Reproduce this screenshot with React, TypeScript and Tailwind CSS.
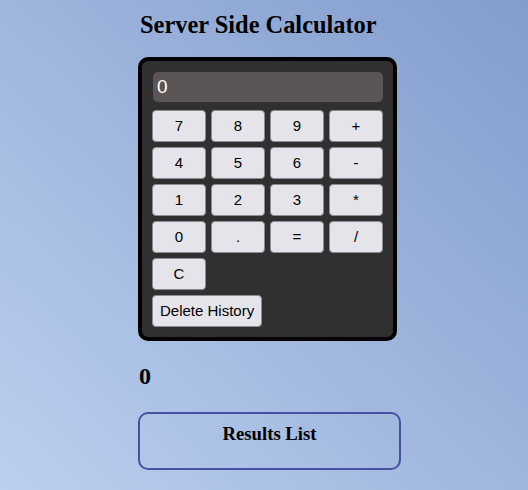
import React from "react";

const keys = ["7", "8", "9", "+", "4", "5", "6", "-", "1", "2", "3", "*", "0", ".", "=", "/", "C"];

const btn =
  "h-[32px] rounded-[4px] border border-[#8d8c92] bg-[#e5e4ea] text-[15px] text-black flex items-center justify-center";

export default function App() {
  return (
    <div
      className="w-[528px] h-[490px] overflow-hidden bg-linear-to-tr from-[#bbcfee] to-[#829ccc] pl-[138px] pt-[11px]"
      style={{ fontFamily: '"Liberation Sans", Arial, sans-serif' }}
    >
      <h2
        className="text-[24.4px] leading-[28px] font-bold text-black pl-[2px]"
        style={{ fontFamily: '"Liberation Serif", "Times New Roman", serif' }}
      >
        Server Side Calculator
      </h2>

      <div className="mt-[18px] w-[259px] h-[284px] rounded-[10px] border-[4px] border-black bg-[#303030] pt-[11px] pl-[10px] pr-[9px] pb-[10px] flex flex-col">
        <div className="mx-[1px] h-[30px] rounded-[5px] bg-[#5b5555] text-white text-[19px] flex items-center pl-[4px]">
          0
        </div>
        <div className="mt-[8px] grid grid-cols-[54px_54px_54px_54px] auto-rows-[32px] gap-[5px]">
          {keys.map((k) => (
            <div key={k} className={btn}>
              {k}
            </div>
          ))}
        </div>
        <div className="mt-[5px] flex">
          <div className={btn + " px-[7px]"}>Delete History</div>
        </div>
      </div>

      <div
        className="mt-[21px] text-[24px] leading-[28px] font-bold text-black pl-[1px]"
        style={{ fontFamily: '"Liberation Serif", "Times New Roman", serif' }}
      >
        0
      </div>

      <div className="mt-[22px] w-[263px] h-[58px] rounded-[10px] border-2 border-[#4a4fa3] pt-[9px]">
        <h3
          className="text-center text-[18.72px] leading-[22px] font-bold text-black"
          style={{ fontFamily: '"Liberation Serif", "Times New Roman", serif' }}
        >
          Results List
        </h3>
      </div>
    </div>
  );
}
